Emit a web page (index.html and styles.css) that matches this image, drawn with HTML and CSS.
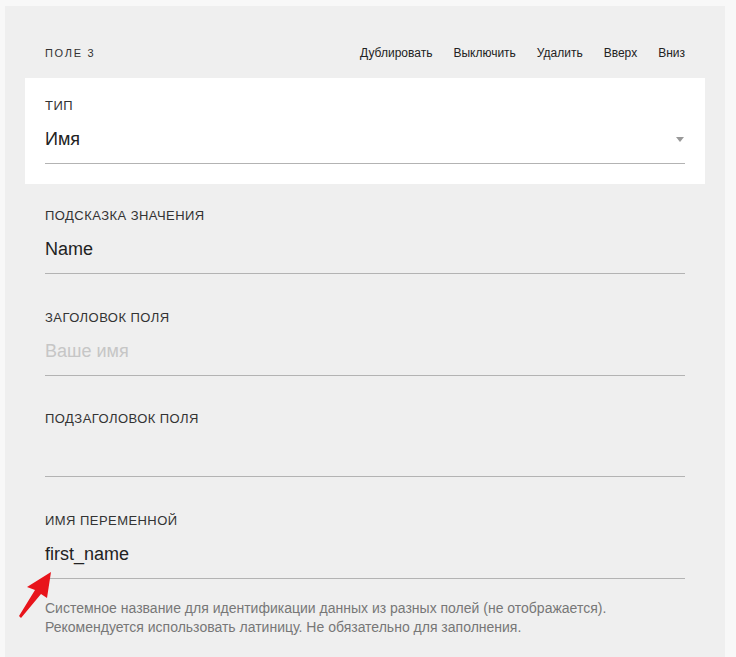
FILE: index.html
```html
<!DOCTYPE html>
<html lang="ru">
<head>
    <meta charset="UTF-8">
    <meta name="viewport" content="width=device-width, initial-scale=1.0">
    <title>Поле 3</title>
    <link rel="stylesheet" href="styles.css">
</head>
<body>
    <div class="panel">
        <div class="panel-head">
            <div class="panel-title">Поле 3</div>
            <div class="actions">
                <span>Дублировать</span>
                <span>Выключить</span>
                <span>Удалить</span>
                <span>Вверх</span>
                <span>Вниз</span>
            </div>
        </div>

        <div class="card">
            <div class="field">
                <div class="label">Тип</div>
                <div class="input select">
                    <span>Имя</span>
                    <span class="caret"></span>
                </div>
            </div>
        </div>

        <div class="field first">
            <div class="label">Подсказка значения</div>
            <div class="input">Name</div>
        </div>

        <div class="field">
            <div class="label">Заголовок поля</div>
            <div class="input placeholder">Ваше имя</div>
        </div>

        <div class="field">
            <div class="label">Подзаголовок поля</div>
            <div class="input">&nbsp;</div>
        </div>

        <div class="field">
            <div class="label">Имя переменной</div>
            <div class="input">first_name</div>
            <div class="hint">Системное название для идентификации данных из разных полей (не отображается).<br>Рекомендуется использовать латиницу. Не обязательно для заполнения.</div>
        </div>

        <svg class="arrow" width="40" height="52" viewBox="0 0 40 52">
            <path d="M36 2 L12 17 L20 20 L4 46 L6 48 L26 24 L32 28 Z" fill="#e8141b"/>
        </svg>
    </div>
</body>
</html>
```

FILE: styles.css
```css
body {
    margin: 0;
    background-color: #f8f8f8;
    font-family: "Liberation Sans", Arial, sans-serif;
    color: #222;
}
.panel {
    position: relative;
    width: 720px;
    min-height: 651px;
    margin: 6px 0 0 5px;
    padding: 0 20px;
    box-sizing: border-box;
    background-color: #efefef;
}
.panel-head {
    display: flex;
    justify-content: space-between;
    align-items: center;
    padding: 36px 20px 14px;
    line-height: 22px;
}
.panel-title {
    font-size: 11px;
    letter-spacing: 1.7px;
    text-transform: uppercase;
    color: #333;
}
.actions {
    display: flex;
    gap: 21px;
    font-size: 12px;
    color: #222;
}
.card {
    background-color: #fff;
    padding: 18px 20px 20px;
}
.field {
    padding: 33.5px 20px 0;
}
.card .field {
    padding: 0;
}
.field.first {
    padding-top: 22px;
}
.label {
    padding-top: 2px;
    font-size: 13px;
    line-height: 16px;
    letter-spacing: 0.45px;
    text-transform: uppercase;
    color: #333;
}
.input {
    margin-top: 5px;
    padding: 8px 0 12px;
    font-size: 18px;
    line-height: 24px;
    color: #222;
    border-bottom: 1px solid #b3b3b3;
}
.input.placeholder {
    color: #c6c6c6;
}
.select {
    display: flex;
    justify-content: space-between;
    align-items: center;
}
.caret {
    width: 0;
    height: 0;
    margin-right: 1px;
    border-left: 4.5px solid transparent;
    border-right: 4.5px solid transparent;
    border-top: 5px solid #999;
}
.hint {
    margin-top: 20px;
    font-size: 14px;
    line-height: 19px;
    color: #777;
}
.arrow {
    position: absolute;
    left: 10px;
    top: 564px;
}
```
